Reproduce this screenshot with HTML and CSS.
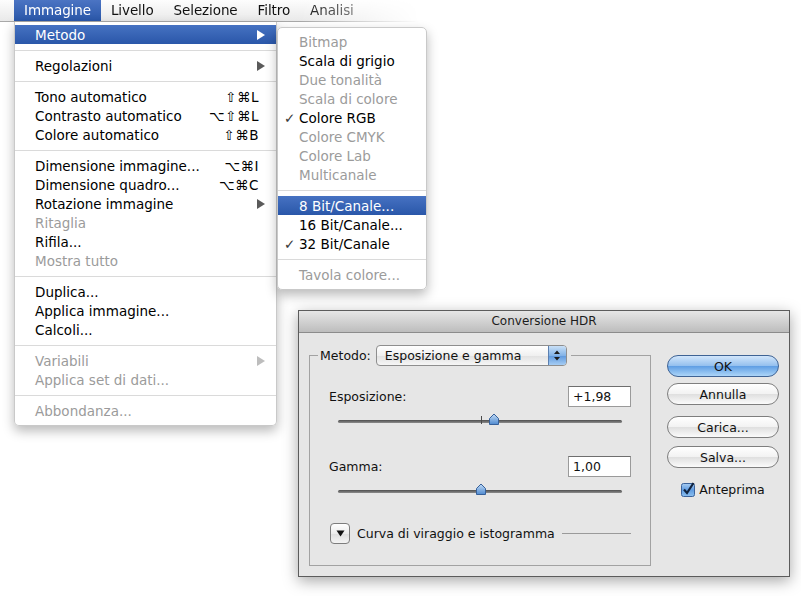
FILE: index.html
```html
<!DOCTYPE html>
<html lang="it">
<head>
  <meta charset="UTF-8">
  <title>Immagine › Metodo</title>
  <link rel="stylesheet" href="styles.css">
</head>
<body>
  <div class="menubar">
    <span class="mb-item active">Immagine</span>
    <span class="mb-item">Livello</span>
    <span class="mb-item">Selezione</span>
    <span class="mb-item">Filtro</span>
    <span class="mb-item">Analisi</span>
  </div>

  <!-- menu Immagine -->
  <div class="menu main-menu">
    <div class="item active"><span class="label">Metodo</span><span class="arrow"></span></div>
    <div class="sep"></div>
    <div class="item"><span class="label">Regolazioni</span><span class="arrow"></span></div>
    <div class="sep"></div>
    <div class="item"><span class="label">Tono automatico</span><span class="key">⇧⌘L</span></div>
    <div class="item"><span class="label">Contrasto automatico</span><span class="key">⌥⇧⌘L</span></div>
    <div class="item"><span class="label">Colore automatico</span><span class="key">⇧⌘B</span></div>
    <div class="sep"></div>
    <div class="item"><span class="label">Dimensione immagine...</span><span class="key">⌥⌘I</span></div>
    <div class="item"><span class="label">Dimensione quadro...</span><span class="key">⌥⌘C</span></div>
    <div class="item"><span class="label">Rotazione immagine</span><span class="arrow"></span></div>
    <div class="item disabled"><span class="label">Ritaglia</span></div>
    <div class="item"><span class="label">Rifila...</span></div>
    <div class="item disabled"><span class="label">Mostra tutto</span></div>
    <div class="sep"></div>
    <div class="item"><span class="label">Duplica...</span></div>
    <div class="item"><span class="label">Applica immagine...</span></div>
    <div class="item"><span class="label">Calcoli...</span></div>
    <div class="sep"></div>
    <div class="item disabled"><span class="label">Variabili</span><span class="arrow"></span></div>
    <div class="item disabled"><span class="label">Applica set di dati...</span></div>
    <div class="sep"></div>
    <div class="item disabled"><span class="label">Abbondanza...</span></div>
  </div>

  <!-- sottomenu Metodo -->
  <div class="menu sub-menu">
    <div class="item disabled"><span class="check"></span>Bitmap</div>
    <div class="item"><span class="check"></span>Scala di grigio</div>
    <div class="item disabled"><span class="check"></span>Due tonalità</div>
    <div class="item disabled"><span class="check"></span>Scala di colore</div>
    <div class="item"><span class="check">✓</span>Colore RGB</div>
    <div class="item disabled"><span class="check"></span>Colore CMYK</div>
    <div class="item disabled"><span class="check"></span>Colore Lab</div>
    <div class="item disabled"><span class="check"></span>Multicanale</div>
    <div class="sep"></div>
    <div class="item active"><span class="check"></span>8 Bit/Canale...</div>
    <div class="item"><span class="check"></span>16 Bit/Canale...</div>
    <div class="item"><span class="check">✓</span>32 Bit/Canale</div>
    <div class="sep"></div>
    <div class="item disabled"><span class="check"></span>Tavola colore...</div>
  </div>

  <!-- finestra Conversione HDR -->
  <div class="dialog">
    <div class="titlebar">Conversione HDR</div>
    <div class="dlg-body">
      <fieldset class="group">
        <legend class="group-head">
          <span>Metodo:</span>
          <div class="popup">
            <span class="popup-text">Esposizione e gamma</span>
            <span class="stepper">
              <svg width="8" height="11" viewBox="0 0 8 11"><path d="M4 0.5 L7 4 H1 Z M4 10.5 L7 7 H1 Z" fill="#1c1c1c"/></svg>
            </span>
          </div>
        </legend>
        <div class="group-inner">
          <div class="field-row">
            <span>Esposizione:</span>
            <div class="num">+1,98</div>
          </div>
          <div class="slider">
            <span class="tick" style="left: 50.4%"></span>
            <span class="thumb" style="left: 55%"><svg width="11" height="12" viewBox="0 0 11 12"><defs><linearGradient id="tg1" x1="0" y1="0" x2="0" y2="1"><stop offset="0" stop-color="#c3dcf6"/><stop offset="1" stop-color="#4f8ad0"/></linearGradient></defs><path d="M1 11.5 V5.5 L5.5 1 L10 5.5 V11.5 Z" fill="url(#tg1)" stroke="#36609a"/></svg></span>
          </div>

          <div class="field-row gap-top">
            <span>Gamma:</span>
            <div class="num">1,00</div>
          </div>
          <div class="slider">
            <span class="thumb" style="left: 50.4%"><svg width="11" height="12" viewBox="0 0 11 12"><defs><linearGradient id="tg2" x1="0" y1="0" x2="0" y2="1"><stop offset="0" stop-color="#c3dcf6"/><stop offset="1" stop-color="#4f8ad0"/></linearGradient></defs><path d="M1 11.5 V5.5 L5.5 1 L10 5.5 V11.5 Z" fill="url(#tg2)" stroke="#36609a"/></svg></span>
          </div>

          <div class="disclosure">
            <span class="disc-btn"><svg width="9" height="7" viewBox="0 0 9 7"><path d="M0.5 0.5 H8.5 L4.5 6.5 Z" fill="#111"/></svg></span>
            <span>Curva di viraggio e istogramma</span>
            <span class="rule"></span>
          </div>
        </div>
      </fieldset>

      <div class="actions">
        <button class="btn default">OK</button>
        <button class="btn">Annulla</button>
        <button class="btn spaced">Carica...</button>
        <button class="btn">Salva...</button>
        <div class="preview">
          <svg width="14" height="15" viewBox="0 0 14 15"><defs><linearGradient id="cb" x1="0" y1="0" x2="0" y2="1"><stop offset="0" stop-color="#a9cdf2"/><stop offset="0.5" stop-color="#5f9be0"/><stop offset="1" stop-color="#8cc0f0"/></linearGradient></defs><rect x="0.5" y="1.5" width="13" height="13" rx="2" fill="url(#cb)" stroke="#3b629a"/><path d="M3 7.5 L6 11 L12.5 1" fill="none" stroke="#10233f" stroke-width="2.2"/></svg>
          <span>Anteprima</span>
        </div>
      </div>
    </div>
  </div>
</body>
</html>
```

FILE: styles.css
```css
* {
  margin: 0;
  padding: 0;
  box-sizing: border-box;
}

body {
  font-family: 'DejaVu Sans', 'Liberation Sans', sans-serif;
  background: #fff;
  width: 801px;
  height: 596px;
  overflow: hidden;
  position: relative;
  color: #111;
}

/* barra dei menu */
.menubar {
  display: flex;
  height: 22px;
  width: 440px;
  padding-left: 14px;
  background: linear-gradient(#fdfdfd, #e9e9e9);
  border-bottom: 1px solid #a9a9a9;
  box-shadow: 0 2px 3px rgba(0, 0, 0, 0.15);
  font-size: 13.5px;
  line-height: 21px;
  -webkit-mask-image: linear-gradient(to right, #000 300px, transparent 420px);
  mask-image: linear-gradient(to right, #000 300px, transparent 420px);
}

.mb-item {
  padding: 0 10px 0 10px;
  letter-spacing: -0.1px;
}

.mb-item.active {
  background: linear-gradient(#4b74c3, #2a57a9);
  color: #fff;
}

/* menu a discesa */
.menu {
  position: absolute;
  background: rgba(255, 255, 255, 0.98);
  font-size: 13.5px;
  box-shadow: 0 5px 12px rgba(0, 0, 0, 0.28);
  border: 1px solid #c9c9c9;
}

.main-menu {
  top: 22px;
  left: 14px;
  width: 263px;
  padding: 3px 0 5px;
  border-top: none;
  border-radius: 0 0 5px 5px;
}

.sub-menu {
  top: 27px;
  left: 277px;
  width: 150px;
  padding: 4px 0 5px;
  border-radius: 5px;
}

.item {
  display: flex;
  align-items: center;
  height: 19px;
  padding: 0 11px 0 20px;
  color: #000;
  white-space: nowrap;
}

.sub-menu .item {
  padding-left: 6px;
}

.item.disabled {
  color: #9b9b9b;
}

.item.active {
  background: linear-gradient(#4672c2, #2a57a9);
  color: #fff;
}

.label {
  flex: 1;
}

.key {
  margin-right: 6px;
  letter-spacing: 0.5px;
}

.arrow {
  width: 0;
  height: 0;
  border-top: 5px solid transparent;
  border-bottom: 5px solid transparent;
  border-left: 8px solid #5a5a5a;
}

.item.active .arrow {
  border-left-color: #fff;
}

.item.disabled .arrow {
  border-left-color: #bdbdbd;
}

.check {
  display: inline-block;
  width: 15px;
  color: #3a3a3a;
  font-size: 13.5px;
}

.sep {
  height: 12px;
  display: flex;
  align-items: center;
}

.sep::after {
  content: '';
  flex: 1;
  height: 1px;
  background: #dadada;
}

/* finestra di dialogo */
.dialog {
  position: absolute;
  left: 298px;
  top: 310px;
  width: 492px;
  height: 267px;
  background: #e6e6e6;
  border: 1px solid #5c5c5c;
  box-shadow: 0 4px 14px rgba(0, 0, 0, 0.35);
  font-size: 12.5px;
  color: #111;
}

.titlebar {
  height: 22px;
  background: linear-gradient(#e6e6e6, #bdbdbd);
  border-bottom: 1px solid #8c8c8c;
  text-align: center;
  font-size: 12px;
  line-height: 21px;
  color: #1c1c1c;
}

.dlg-body {
  display: flex;
  padding: 12px 10px 0;
}

.group {
  width: 342px;
  border: 1px solid #a2a2a2;
  padding: 0;
}

.group-head {
  display: flex;
  align-items: center;
  gap: 5px;
  margin-left: 8px;
  padding: 0 4px 0 2px;
}

.popup {
  display: flex;
  width: 191px;
  height: 21px;
  border: 1px solid #8e8e8e;
  border-radius: 4px;
  background: linear-gradient(#ffffff, #f0f0f0 50%, #e1e1e1 51%, #f6f6f6);
  overflow: hidden;
}

.popup-text {
  flex: 1;
  padding-left: 8px;
  line-height: 19px;
}

.stepper {
  width: 18px;
  display: flex;
  align-items: center;
  justify-content: center;
  border-left: 1px solid #5b7fb0;
  background: linear-gradient(#c9e0f7, #83b3e7 50%, #5d97dc 51%, #a6cdf4);
}

.group-inner {
  padding: 20px 19px 21px;
}

.field-row {
  display: flex;
  align-items: center;
  justify-content: space-between;
  height: 21px;
}

.field-row.gap-top {
  margin-top: 30px;
}

.num {
  width: 63px;
  height: 21px;
  background: #fff;
  border: 1px solid #9a9a9a;
  border-top-color: #6e6e6e;
  padding-left: 4px;
  line-height: 19px;
}

.slider {
  position: relative;
  width: 284px;
  height: 14px;
  margin: 5px 0 0 9px;
}

.slider::before {
  content: '';
  position: absolute;
  left: 0;
  right: 0;
  top: 8px;
  height: 3px;
  border-radius: 2px;
  background: linear-gradient(#4e4e4e, #8d8d8d);
}

.tick {
  position: absolute;
  top: 4px;
  width: 1px;
  height: 8px;
  background: #4a4a4a;
}

.thumb {
  position: absolute;
  top: 1px;
  width: 11px;
  height: 12px;
  transform: translateX(-50%);
  display: flex;
}

.disclosure {
  display: flex;
  align-items: center;
  margin-top: 27px;
  height: 21px;
}

.disc-btn {
  width: 20px;
  height: 21px;
  margin: 0 7px 0 1px;
  border: 1px solid #7d7d7d;
  border-radius: 4px;
  background: linear-gradient(#ffffff, #ececec 50%, #dedede 51%, #f4f4f4);
  display: flex;
  align-items: center;
  justify-content: center;
}

.rule {
  flex: 1;
  height: 1px;
  margin-left: 7px;
  background: #9a9a9a;
}

.actions {
  width: 112px;
  margin-left: 16px;
  padding-top: 10px;
  display: flex;
  flex-direction: column;
}

.btn {
  height: 22px;
  border: 1px solid #7e7e7e;
  border-radius: 11px;
  background: linear-gradient(#ffffff, #f2f2f2 50%, #dfdfdf 51%, #fbfbfb);
  font-family: inherit;
  font-size: 12.5px;
  color: #111;
  margin-bottom: 6px;
}

.btn.default {
  border-color: #3f6394;
  background: linear-gradient(#d2e6fb, #93bfee 50%, #5f9ee4 51%, #acd5f8);
}

.btn.spaced {
  margin-top: 5px;
  margin-bottom: 8px;
}

.preview {
  display: flex;
  align-items: center;
  justify-content: center;
  gap: 4px;
  margin-top: 7px;
  height: 16px;
}
```
